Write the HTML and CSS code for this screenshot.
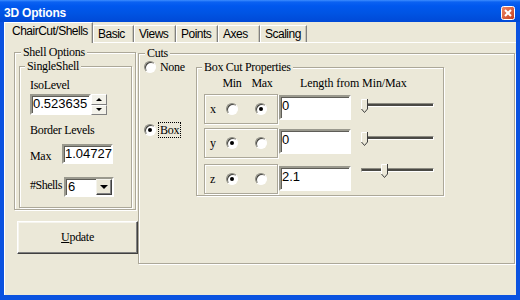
FILE: index.html
```html
<!DOCTYPE html>
<html lang="en">
<head>
    <meta charset="UTF-8" />
    <title>3D Options</title>
    <link rel="stylesheet" href="styles.css">
</head>
<body>
    <div class="window">
        <div class="titlebar">
            <span class="title">3D Options</span>
            <svg class="close" width="14" height="14" viewBox="0 0 14 14">
                <defs>
                    <linearGradient id="closeFill" x1="0" y1="0" x2="1" y2="1">
                        <stop offset="0" stop-color="#ee8a6a" />
                        <stop offset="1" stop-color="#c43c1a" />
                    </linearGradient>
                </defs>
                <rect x="0.5" y="0.5" width="13" height="13" rx="2" fill="url(#closeFill)" stroke="#fff" />
                <path d="M4 4l6 6M10 4l-6 6" stroke="#fff" stroke-width="2" />
            </svg>
        </div>

        <div class="client">
            <div class="tabs">
                <div class="tab tab-active w-chair">ChairCut/Shells</div>
                <div class="tab w-basic">Basic</div>
                <div class="tab w-views">Views</div>
                <div class="tab w-points">Points</div>
                <div class="tab w-axes">Axes</div>
                <div class="tab w-scaling">Scaling</div>
            </div>

            <div class="page">
                <div class="col-left">
                    <div class="group shell-options">
                        <span class="caption">Shell Options</span>
                        <div class="group single-shell">
                            <span class="caption caption-tight">SingleShell</span>
                            <div class="shell-body">
                                <div class="label iso-label">IsoLevel</div>
                                <div class="iso-row">
                                    <div class="field iso-field">0.523635</div>
                                    <div class="spinner">
                                        <span class="spin-btn"><i class="arrow-up"></i></span>
                                        <span class="spin-btn"><i class="arrow-down"></i></span>
                                    </div>
                                </div>
                                <div class="label border-label">Border Levels</div>
                                <div class="max-row">
                                    <span class="label max-label">Max</span>
                                    <div class="field max-field">1.04727</div>
                                </div>
                                <div class="shells-row">
                                    <span class="label shells-label">#Shells</span>
                                    <div class="combo">
                                        <span class="combo-value">6</span>
                                        <span class="combo-btn"><i class="arrow-combo"></i></span>
                                    </div>
                                </div>
                            </div>
                        </div>
                    </div>
                    <button class="update-btn"><u>U</u>pdate</button>
                </div>

                <div class="group cuts">
                    <span class="caption">Cuts</span>
                    <div class="cuts-body">
                        <div class="cut-modes">
                            <div class="mode-row mode-none"><span class="radio"></span><span class="mode-text">None</span></div>
                            <div class="mode-row mode-box"><span class="radio radio-on"></span><span class="mode-text focus">Box</span></div>
                        </div>

                        <div class="group box-props">
                            <span class="caption caption-tight">Box Cut Properties</span>
                            <div class="props-head">
                                <span class="head-min">Min</span>
                                <span class="head-max">Max</span>
                                <span class="head-len">Length from Min/Max</span>
                            </div>

                            <div class="axis-row">
                                <div class="group axis-box">
                                    <span class="axis-name">x</span>
                                    <span class="radio"></span>
                                    <span class="radio radio-on radio-max"></span>
                                </div>
                                <div class="field axis-field">0</div>
                                <div class="slider">
                                    <div class="track"></div>
                                    <svg class="thumb" style="left: 1px;" width="7" height="14" viewBox="0 0 7 14">
                                        <path d="M0.5 0.5h6v9.5l-3 3.5-3-3.5z" fill="#ebe8d8" />
                                        <path d="M0.5 10V0.5H6" stroke="#fff" fill="none" />
                                        <path d="M6.5 0v10l-3 3.5-3-3.5" stroke="#404040" fill="none" />
                                    </svg>
                                </div>
                            </div>

                            <div class="axis-row">
                                <div class="group axis-box">
                                    <span class="axis-name">y</span>
                                    <span class="radio radio-on"></span>
                                    <span class="radio radio-max"></span>
                                </div>
                                <div class="field axis-field">0</div>
                                <div class="slider slider-y">
                                    <div class="track"></div>
                                    <svg class="thumb" style="left: 1px;" width="7" height="14" viewBox="0 0 7 14">
                                        <path d="M0.5 0.5h6v9.5l-3 3.5-3-3.5z" fill="#ebe8d8" />
                                        <path d="M0.5 10V0.5H6" stroke="#fff" fill="none" />
                                        <path d="M6.5 0v10l-3 3.5-3-3.5" stroke="#404040" fill="none" />
                                    </svg>
                                </div>
                            </div>

                            <div class="axis-row axis-row-z">
                                <div class="group axis-box">
                                    <span class="axis-name">z</span>
                                    <span class="radio radio-on"></span>
                                    <span class="radio radio-max"></span>
                                </div>
                                <div class="field axis-field">2.1</div>
                                <div class="slider slider-z">
                                    <div class="track"></div>
                                    <svg class="thumb" style="left: 21px;" width="7" height="14" viewBox="0 0 7 14">
                                        <path d="M0.5 0.5h6v9.5l-3 3.5-3-3.5z" fill="#ebe8d8" />
                                        <path d="M0.5 10V0.5H6" stroke="#fff" fill="none" />
                                        <path d="M6.5 0v10l-3 3.5-3-3.5" stroke="#404040" fill="none" />
                                    </svg>
                                </div>
                            </div>
                        </div>
                    </div>
                </div>
            </div>
        </div>
    </div>
</body>
</html>
```

FILE: styles.css
```css
* {
    box-sizing: border-box;
}
body {
    margin: 0;
    background: #0a52e0;
    font-family: "Liberation Serif", serif;
    font-size: 12px;
    letter-spacing: -0.3px;
    color: #000;
}
.window {
    width: 520px;
    height: 300px;
    display: flex;
    flex-direction: column;
}
.titlebar {
    height: 22px;
    flex: none;
    display: flex;
    align-items: center;
    justify-content: space-between;
    padding: 4px 5px 0 4px;
    background: linear-gradient(to bottom, #3d8dff 0, #0b62f2 2px, #0058ee 6px, #0054e3 60%, #0049d6 100%);
}
.title {
    font: bold 12px/14px "Liberation Sans", sans-serif;
    letter-spacing: -0.2px;
    color: #fff;
}
.close {
    display: block;
}

.client {
    flex: 1;
    display: flex;
    flex-direction: column;
    overflow: hidden;
    background: #ebe8d8;
    border-style: solid;
    border-color: #0a52e0;
    border-width: 0 4px 5px 4px;
}

/* tabs */
.tabs {
    height: 20px;
    flex: none;
    display: flex;
    align-items: flex-end;
    position: relative;
    z-index: 1;
    font: 12px/14px "Liberation Sans", sans-serif;
    letter-spacing: -0.5px;
}
.tab {
    height: 17px;
    padding: 1px 0 0 4px;
    border-top: 1px solid #fff;
    border-left: 1px solid #fff;
    border-right: 1px solid #808080;
    box-shadow: inset -1px 0 0 #c9c6b6;
    white-space: nowrap;
}
.tab-active {
    height: 21px;
    margin-bottom: -1px;
    padding-left: 7px;
    background: #ebe8d8;
}
.w-chair { width: 89px; }
.w-basic { width: 41px; }
.w-views { width: 42px; }
.w-points { width: 42px; }
.w-axes { width: 42px; }
.w-scaling { width: 47px; }

.page {
    flex: 1;
    display: flex;
    align-items: flex-start;
    padding-left: 9px;
    border-top: 1px solid #fff;
    border-left: 1px solid #fff;
}

/* group boxes */
.group {
    border: 1px solid #aca899;
    box-shadow: inset 1px 1px 0 #fff, 1px 1px 0 #fff;
}
.caption {
    display: block;
    width: fit-content;
    margin: -8px 0 0 6px;
    padding: 0 2px;
    line-height: 14px;
    background: #ebe8d8;
    white-space: nowrap;
}
.caption-tight {
    margin-left: 5px;
}
.label {
    line-height: 14px;
    white-space: nowrap;
}

/* left column */
.col-left {
    width: 124px;
    flex: none;
}
.shell-options {
    width: 122px;
    height: 158px;
    margin-top: 9px;
}
.single-shell {
    width: 113px;
    height: 142px;
    margin: 7px 0 0 4px;
}
.shell-body {
    padding-left: 10px;
}
.iso-label {
    margin-top: 5px;
}
.iso-row {
    display: flex;
    margin-top: 2px;
    height: 21px;
}
.field {
    background: #fff;
    border: 2px solid;
    border-color: #9a998e #fff #fff #9a998e;
    box-shadow: inset 1px 1px 0 #5e5d57;
    font: 13px/15px "Liberation Sans", sans-serif;
    letter-spacing: 0;
    padding-left: 1px;
    white-space: nowrap;
}
.iso-field {
    width: 61px;
    height: 21px;
}
.spinner {
    width: 16px;
    display: flex;
    flex-direction: column;
}
.spin-btn {
    flex: 1;
    display: flex;
    align-items: center;
    justify-content: center;
    background: #f3f2ea;
    border: 1px solid;
    border-color: #fff #808080 #808080 #fff;
}
.arrow-up, .arrow-down, .arrow-combo {
    display: block;
    width: 0;
    height: 0;
    border-left: 3px solid transparent;
    border-right: 3px solid transparent;
}
.arrow-up {
    border-bottom: 3px solid #000;
}
.arrow-down {
    border-top: 3px solid #000;
}
.border-label {
    margin-top: 8px;
}
.max-row {
    display: flex;
    margin-top: 7px;
    height: 20px;
}
.max-label {
    width: 32px;
    margin-top: 5px;
}
.max-field {
    width: 51px;
    height: 20px;
}
.shells-row {
    display: flex;
    margin-top: 13px;
    height: 20px;
}
.shells-label {
    width: 34px;
    margin-top: 1px;
    letter-spacing: -0.5px;
}
.combo {
    width: 50px;
    height: 20px;
    display: flex;
    justify-content: space-between;
    background: #fff;
    border: 2px solid;
    border-color: #9a998e #fff #fff #9a998e;
    box-shadow: inset 1px 1px 0 #5e5d57;
    font: 13px/15px "Liberation Sans", sans-serif;
}
.combo-value {
    padding-left: 2px;
}
.combo-btn {
    width: 16px;
    display: flex;
    align-items: center;
    justify-content: center;
    background: #ebe8d8;
    border: 1px solid;
    border-color: #f4f3ec #404040 #404040 #f4f3ec;
    box-shadow: inset -1px -1px 0 #808080;
}
.arrow-combo {
    border-left-width: 4px;
    border-right-width: 4px;
    border-top: 4px solid #000;
}
.update-btn {
    display: block;
    width: 121px;
    height: 33px;
    margin: 11px 0 0 3px;
    padding: 0;
    background: #ebe8d8;
    border: 1px solid;
    border-color: #fff #404040 #404040 #fff;
    box-shadow: inset -1px -1px 0 #808080, inset 1px 1px 0 #f6f5ef;
    font: 12px "Liberation Serif", serif;
    letter-spacing: -0.3px;
    color: #000;
}

/* cuts */
.cuts {
    width: 377px;
    height: 211px;
    margin-top: 10px;
    flex: none;
}
.cuts-body {
    display: flex;
    align-items: flex-start;
}
.cut-modes {
    width: 57px;
    flex: none;
    padding-left: 5px;
}
.mode-row {
    display: flex;
    align-items: center;
}
.mode-none {
    height: 14px;
}
.mode-box {
    margin-top: 48px;
    height: 16px;
}
.mode-text {
    margin-left: 4px;
    line-height: 14px;
}
.focus {
    margin-left: 2px;
    padding: 0 1px;
    border: 1px dotted #000;
}
.radio {
    width: 12px;
    height: 12px;
    flex: none;
    display: flex;
    align-items: center;
    justify-content: center;
    border-radius: 50%;
    background: #fff;
    border: 1px solid;
    border-color: #8a897f #fff #fff #8a897f;
    box-shadow: inset 1px 1px 0 #45443f;
}
.radio-on::after {
    content: "";
    width: 4px;
    height: 4px;
    border-radius: 50%;
    background: #000;
}

.box-props {
    width: 248px;
    height: 129px;
    margin-top: 7px;
    flex: none;
}
.props-head {
    display: flex;
    margin-top: 2px;
    padding-left: 20px;
    line-height: 14px;
    white-space: nowrap;
}
.head-min, .head-max {
    width: 30px;
    text-align: center;
}
.head-len {
    margin-left: 23px;
    letter-spacing: -0.1px;
}
.axis-row {
    display: flex;
    align-items: flex-start;
    margin-top: 4px;
    padding-left: 7px;
}
.axis-row-z {
    margin-top: 6px;
}
.axis-box {
    width: 74px;
    height: 30px;
    flex: none;
    display: flex;
    align-items: center;
    padding-left: 5px;
}
.axis-name {
    width: 16px;
    line-height: 14px;
}
.radio-max {
    margin-left: 17px;
}
.axis-field {
    width: 72px;
    height: 25px;
    margin: 1px 0 0 1px;
    padding-top: 1px;
    flex: none;
}
.axis-row-z .axis-field {
    margin-top: 2px;
}
.slider {
    position: relative;
    width: 74px;
    height: 14px;
    margin: 5px 0 0 9px;
    flex: none;
}
.slider-y {
    margin-top: 4px;
}
.slider-z {
    margin-top: 0;
}
.track {
    height: 4px;
    margin: 4px 0 0 1px;
    border-top: 1px solid #8c8b81;
    border-left: 1px solid #8c8b81;
    border-bottom: 1px solid #fff;
    border-right: 1px solid #fff;
    background: #4a4944;
}
.thumb {
    position: absolute;
    top: 0;
}
```
